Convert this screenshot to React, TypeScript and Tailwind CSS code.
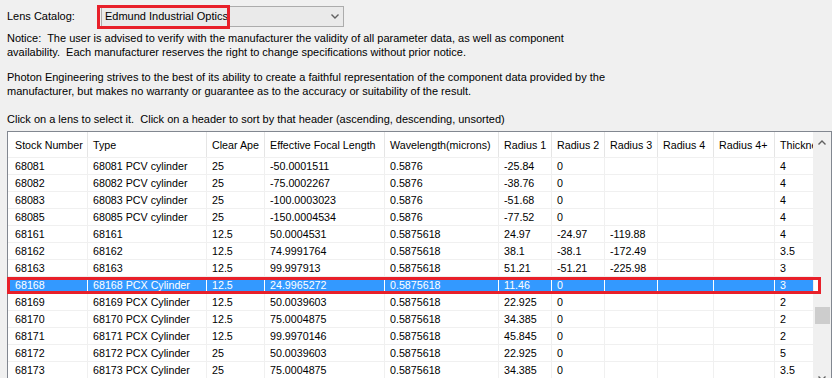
import React from 'react';

const headers = ['Stock Number', 'Type', 'Clear Ape', 'Effective Focal Length', 'Wavelength(microns)', 'Radius 1', 'Radius 2', 'Radius 3', 'Radius 4', 'Radius 4+', 'Thickness'];

const rows: string[][] = [
  ['68081', '68081 PCV cylinder', '25', '-50.0001511', '0.5876', '-25.84', '0', '', '', '', '4'],
  ['68082', '68082 PCV cylinder', '25', '-75.0002267', '0.5876', '-38.76', '0', '', '', '', '4'],
  ['68083', '68083 PCV cylinder', '25', '-100.0003023', '0.5876', '-51.68', '0', '', '', '', '4'],
  ['68085', '68085 PCV cylinder', '25', '-150.0004534', '0.5876', '-77.52', '0', '', '', '', '4'],
  ['68161', '68161', '12.5', '50.0004531', '0.5875618', '24.97', '-24.97', '-119.88', '', '', '4'],
  ['68162', '68162', '12.5', '74.9991764', '0.5875618', '38.1', '-38.1', '-172.49', '', '', '3.5'],
  ['68163', '68163', '12.5', '99.997913', '0.5875618', '51.21', '-51.21', '-225.98', '', '', '3'],
  ['68168', '68168 PCX Cylinder', '12.5', '24.9965272', '0.5875618', '11.46', '0', '', '', '', '3'],
  ['68169', '68169 PCX Cylinder', '12.5', '50.0039603', '0.5875618', '22.925', '0', '', '', '', '2'],
  ['68170', '68170 PCX Cylinder', '12.5', '75.0004875', '0.5875618', '34.385', '0', '', '', '', '2'],
  ['68171', '68171 PCX Cylinder', '12.5', '99.9970146', '0.5875618', '45.845', '0', '', '', '', '2'],
  ['68172', '68172 PCX Cylinder', '25', '50.0039603', '0.5875618', '22.925', '0', '', '', '', '5'],
  ['68173', '68173 PCX Cylinder', '25', '75.0004875', '0.5875618', '34.385', '0', '', '', '', '3.5'],
];

const SELECTED = 7;
const gridCols = 'grid grid-cols-[80px_119px_58px_120px_114px_53px_53px_53px_56px_61px_38px]';

const Chevron: React.FC<{ up?: boolean }> = ({ up }) => (
  <svg width="8" height="5" viewBox="0 0 8 5" className="block">
    <polyline
      points={up ? '0.5,4.5 4,1 7.5,4.5' : '0.5,0.5 4,4 7.5,0.5'}
      fill="none"
      stroke="#606060"
      strokeWidth="1.4"
    />
  </svg>
);

export default function App() {
  return (
    <div className="w-[832px] h-[378px] overflow-hidden bg-[#f0f0f0] text-black font-['Liberation_Sans',Arial,sans-serif] text-[10.7px]">
      <div className="flex items-center h-[21px] mt-[6px] pl-[7px] text-[11px]">
        <span className="w-[94px]">Lens Catalog:</span>
        <div className="relative w-[243px] h-[21px] border border-[#acacac] bg-[#eaeaea] flex items-center justify-between pl-[3px] pr-[4px]">
          <span>Edmund Industrial Optics</span>
          <Chevron />
          <div className="absolute -left-[5px] -top-[2px] w-[133px] h-[24px] border-[3px] border-[#e8202a]" />
        </div>
      </div>

      <div className="mt-[4px] pl-[7px] leading-[14px] whitespace-pre text-[11px]">
        <div>Notice:  The user is advised to verify with the manufacturer the validity of all parameter data, as well as component</div>
        <div>availability.  Each manufacturer reserves the right to change specifications without prior notice.</div>
      </div>

      <div className="mt-[11px] pl-[7px] leading-[14px] whitespace-pre text-[11px]">
        <div>Photon Engineering strives to the best of its ability to create a faithful representation of the component data provided by the</div>
        <div>manufacturer, but makes no warranty or guarantee as to the accuracy or suitability of the result.</div>
      </div>

      <div className="mt-[14px] pl-[7px] leading-[14px] whitespace-pre text-[11px]">
        Click on a lens to select it.  Click on a header to sort by that header (ascending, descending, unsorted)
      </div>

      <div className="relative mt-[5px] ml-[7px] w-[825px] h-[260px] border border-[#828790] bg-white flex">
        <div className="w-[805px]">
          <div className={`${gridCols} h-[26px] border-b border-[#f0f0f0]`}>
            {headers.map((h, i) => (
              <div
                key={h}
                className={`flex items-center pt-[2px] overflow-hidden whitespace-nowrap ${i === 0 ? 'pl-[7px]' : 'pl-[5px]'} ${i < headers.length - 1 ? 'border-r border-[#e5e5e5]' : ''}`}
              >
                {h}
              </div>
            ))}
          </div>
          {rows.map((r, ri) => {
            const sel = ri === SELECTED;
            return (
              <div
                key={r[0]}
                className={`${gridCols} h-[17px] border-b border-[#f0f0f0] ${sel ? 'bg-[#3399ff] text-white' : ''}`}
              >
                {r.map((c, ci) => (
                  <div
                    key={ci}
                    className={`leading-[16px] overflow-hidden whitespace-nowrap ${ci === 0 ? 'pl-[7px]' : 'pl-[5px]'} ${ci < r.length - 1 ? (sel ? 'border-r border-white' : 'border-r border-[#f0f0f0]') : ''}`}
                  >
                    {c}
                  </div>
                ))}
              </div>
            );
          })}
        </div>

        <div className="w-[18px] bg-[#f0f0f0] flex flex-col items-center">
          <div className="mt-[8px] pr-[1px]">
            <Chevron up />
          </div>
          <div className="mt-[162px] w-[15px] h-[17px] bg-[#cdcdcd]" />
          <div className="mt-[52px] pr-[1px]">
            <Chevron />
          </div>
        </div>

        <div className="absolute -left-[1px] top-[145px] w-[814px] h-[17px] border-[3px] border-[#e8202a] flex justify-end">
          <div className="w-[4px] h-full bg-white" />
        </div>
      </div>
    </div>
  );
}
